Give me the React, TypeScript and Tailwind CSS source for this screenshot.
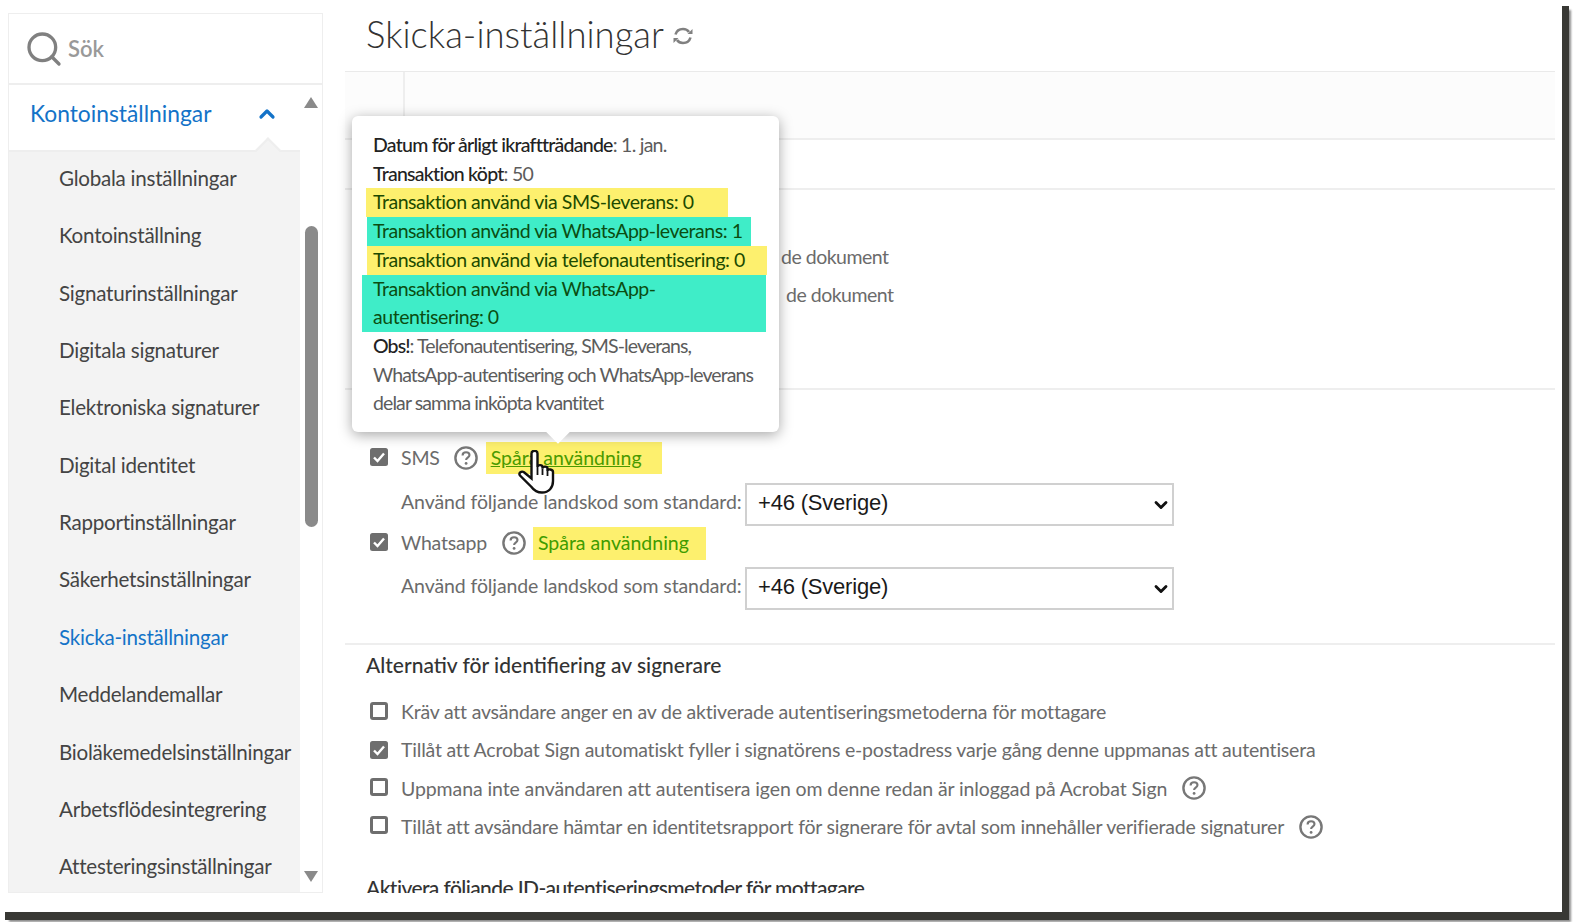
import { ChevronDown, ChevronUp, Search } from "lucide-react";

const MENU_ITEMS = [
  "Globala inställningar",
  "Kontoinställning",
  "Signaturinställningar",
  "Digitala signaturer",
  "Elektroniska signaturer",
  "Digital identitet",
  "Rapportinställningar",
  "Säkerhetsinställningar",
  "Skicka-inställningar",
  "Meddelandemallar",
  "Bioläkemedelsinställningar",
  "Arbetsflödesintegrering",
  "Attesteringsinställningar",
];

function Checkbox({ checked }: { checked?: boolean }) {
  if (checked) {
    return (
      <svg width="18" height="18" viewBox="0 0 18 18" className="shrink-0">
        <rect width="18" height="18" rx="2.5" fill="#6e6e6e" />
        <path d="M4 9.5l3.5 3.5L14 5.5" fill="none" stroke="#fff" strokeWidth="2.4" />
      </svg>
    );
  }
  return <span className="block h-[18px] w-[18px] shrink-0 rounded-[3px] border-[3px] border-[#6e6e6e] bg-white" />;
}

function Help() {
  return (
    <svg width="24" height="24" viewBox="0 0 24 24" className="shrink-0" fill="none" stroke="#777">
      <circle cx="12" cy="12" r="10.6" strokeWidth="2.4" />
      <path d="M8.6 9.4c0-2 1.5-3.1 3.5-3.1s3.4 1.1 3.4 2.8c0 2.6-3.4 2.6-3.4 5" strokeWidth="2.1" />
      <circle cx="12.1" cy="17.4" r="1.4" fill="#777" stroke="none" />
    </svg>
  );
}

function RefreshIcon() {
  return (
    <svg width="22" height="20" viewBox="0 0 22 20" fill="none" stroke="#808080" strokeWidth="2.6" className="mt-[3px]">
      <path d="M3.5 8.5C4.5 5 7.5 3 11 3c2.6 0 4.7 1 6 3" />
      <path d="M18.5 11.5c-1 3.5-4 5.5-7.5 5.5-2.6 0-4.7-1-6-3" />
      <path d="M20.5 3v5h-5z" strokeWidth="0" fill="#808080" />
      <path d="M1.5 17v-5h5z" strokeWidth="0" fill="#808080" />
    </svg>
  );
}

function CountrySelect() {
  return (
    <div className="relative h-[43px] w-[429px] shrink-0">
      <select
        defaultValue="46"
        className="h-full w-full appearance-none border-2 border-[#d0d0d0] bg-white pb-[5px] pl-[11px] font-['Liberation_Sans',sans-serif] text-[22px] text-[#1a1a1a]"
      >
        <option value="46">+46 (Sverige)</option>
      </select>
      <ChevronDown size={20} strokeWidth={3.4} className="pointer-events-none absolute right-[3px] top-[12px] text-[#111]" />
    </div>
  );
}

function UsageStats() {
  return (
    <div className="absolute left-[352px] top-[116px] z-10 h-[316px] w-[427px] rounded-md bg-white pl-[21px] pt-[15px] text-[19.5px] leading-[28.7px] tracking-[-0.45px] whitespace-nowrap text-[#5c5c5c] shadow-[0_3px_14px_rgba(0,0,0,0.35)]">
      <div className="tracking-[-0.75px]"><b className="font-medium text-[#222]">Datum för årligt ikraftträdande</b>: 1. jan.</div>
      <div className="tracking-[-0.75px]"><b className="font-medium text-[#222]">Transaktion köpt</b>: 50</div>
      <div className="-ml-[7px] w-[362px] bg-[#fdf06e] pl-[7px] text-[#1c4a00]">Transaktion använd via SMS-leverans: 0</div>
      <div className="-ml-[6px] w-[384px] bg-[#3fedc8] pl-[6px] text-[#0b4d12]">Transaktion använd via WhatsApp-leverans: 1</div>
      <div className="-ml-[6px] w-[400px] bg-[#fdf06e] pl-[6px] text-[#1c4a00]">Transaktion använd via telefonautentisering: 0</div>
      <div className="-ml-[11px] w-[404px] bg-[#3fedc8] pl-[11px] text-[#0b4d12]">Transaktion använd via WhatsApp-<br />autentisering: 0</div>
      <div className="tracking-[-0.9px]">
        <b className="font-medium text-[#222]">Obs!</b>: Telefonautentisering, SMS-leverans,<br />
        WhatsApp-autentisering och WhatsApp-leverans<br />
        delar samma inköpta kvantitet
      </div>
      <span className="absolute -bottom-[8px] left-[197px] h-[18px] w-[18px] rotate-45 bg-white" />
    </div>
  );
}

function HandCursor() {
  return (
    <svg width="38" height="44" viewBox="0 0 38 44" className="absolute left-[518px] top-[450px] z-20">
      <path
        d="M13.5 3.5c0-3.5 6-3.5 6 0V17c0-2.5 5-2.5 5 0v1.5c0-2.5 5-2.5 5 0V21c0-2.5 5.5-2 5.5 1v9c0 6.5-4 11.5-11 11.5-5.5 0-8-2-10.5-5.5L2 25.5c-1.8-2.5 1.5-5 4-3.2l7.5 6.2z"
        fill="#fff"
        stroke="#111"
        strokeWidth="2.4"
      />
      <path d="M19.5 17v8M24.5 18.5V25M29.5 21v5" stroke="#111" strokeWidth="1.8" />
    </svg>
  );
}

function OptionRow({ checked, text, help, raised, wide }: { checked?: boolean; text: string; help?: boolean; raised?: boolean; wide?: boolean }) {
  return (
    <div className="flex h-[38.5px] items-center whitespace-nowrap">
      <span className={raised ? "mb-[3px] flex" : "flex"}>
        <Checkbox checked={checked} />
      </span>
      <span className={wide ? "ml-[13px] tracking-[-0.1px]" : "ml-[13px]"}>{text}</span>
      {help && <span className="ml-[15px]"><Help /></span>}
    </div>
  );
}

export default function App() {
  return (
    <div className="relative h-[922px] w-[1580px] overflow-hidden bg-white pl-[5px] pt-[6px] font-['Lato',sans-serif]">
      <UsageStats />
      <HandCursor />

      <div className="flex h-[914px] w-[1564px] items-start border-b-[8px] border-r-[7px] border-[#383834] bg-white pl-[3px] pt-[7px] shadow-[3px_3px_2px_-1px_rgba(0,0,0,0.45)]">
        {/* sidebar */}
        <aside className="flex h-[880px] w-[315px] shrink-0 flex-col border border-[#eeeeee]">
          <div className="flex h-[71px] shrink-0 items-center gap-[4px] border-b-2 border-[#eeeeee] pl-[15px]">
            <Search size={40} strokeWidth={2} className="text-[#808080]" />
            <span className="text-[22px] font-semibold text-[#999]">Sök</span>
          </div>
          <div className="flex min-h-0 flex-1">
            <div className="flex w-[291px] shrink-0 flex-col">
              <div className="relative flex h-[67px] shrink-0 items-center justify-between border-b-2 border-[#eeeeee] pb-[8px] pl-[21px] pr-[21px]">
                <span className="text-[22.8px] text-[#1473c8]">Kontoinställningar</span>
                <ChevronUp size={24} strokeWidth={3.2} className="text-[#1473c8]" />
                <span className="absolute -bottom-[9px] right-[23px] z-10 h-[18px] w-[18px] rotate-45 border-l-2 border-t-2 border-[#eeeeee] bg-[#f3f3f3]" />
              </div>
              <ul className="flex-1 overflow-hidden bg-[#f3f3f3] pl-[50px]">
                {MENU_ITEMS.map((item) => (
                  <li
                    key={item}
                    className={`flex h-[57.4px] items-center whitespace-nowrap pb-[5px] text-[20.6px] tracking-[-0.25px] ${
                      item === "Skicka-inställningar" ? "text-[#1473c8]" : "text-[#444]"
                    }`}
                  >
                    {item}
                  </li>
                ))}
              </ul>
            </div>
            <div className="flex flex-1 flex-col items-center pb-[10px] pt-[12px]">
              <span className="h-0 w-0 border-x-[7px] border-b-[11px] border-x-transparent border-b-[#8a8a8a]" />
              <span className="mt-[118px] h-[301px] w-[13px] rounded-full bg-[#8a8a8a]" />
              <span className="mt-auto h-0 w-0 border-x-[7px] border-t-[11px] border-x-transparent border-t-[#8a8a8a]" />
            </div>
          </div>
        </aside>

        {/* main */}
        <main className="ml-[22px] h-[880px] w-[1210px] shrink-0 overflow-hidden text-[19.5px] tracking-[-0.2px] text-[#6b6b6b]">
          <div className="flex h-[59px] items-center gap-[8px] border-b border-[#eaeaea] pb-[16px] pl-[21px]">
            <h1 className="text-[36.5px] font-light tracking-normal text-[#333]">Skicka-inställningar</h1>
            <RefreshIcon />
          </div>
          <div className="h-[68px] border-b-2 border-[#eeeeee] bg-[#fcfcfc] pl-[58px]">
            <div className="h-full border-l-2 border-[#eeeeee]" />
          </div>
          <div className="h-[50px] border-b-2 border-[#eeeeee]" />
          <div className="h-[200px] border-b-2 border-[#eeeeee] pl-[436px] pt-[53px] tracking-[-0.5px]">
            <div className="h-[38px] leading-[28px]">de dokument</div>
            <div className="h-[38px] pl-[5px] leading-[28px]">de dokument</div>
          </div>

          <div className="h-[255px] border-b-2 border-[#eeeeee] pl-[25px] pt-[46px]">
            <div className="flex h-[44px] items-center">
              <span className="mb-[3px] flex"><Checkbox checked /></span>
              <span className="ml-[13px]">SMS</span>
              <span className="ml-[14px]"><Help /></span>
              <span className="ml-[8px] flex h-[32px] items-center bg-[#fdf06e] pl-[5px] pr-[20px] tracking-normal text-[#4a9a00] underline">Spåra användning</span>
            </div>
            <div className="mt-[3px] flex items-center pl-[31px]">
              <span className="w-[344px] shrink-0 whitespace-nowrap pb-[5px] tracking-[-0.1px]">Använd följande landskod som standard:</span>
              <CountrySelect />
            </div>
            <div className="flex h-[34px] items-center">
              <span className="mb-[3px] flex"><Checkbox checked /></span>
              <span className="ml-[13px]">Whatsapp</span>
              <span className="ml-[15px]"><Help /></span>
              <span className="ml-[7px] flex h-[33px] items-center bg-[#fdf06e] pl-[5px] pr-[17px] tracking-normal text-[#3f9c00]">Spåra användning</span>
            </div>
            <div className="mt-[7px] flex items-center pl-[31px]">
              <span className="w-[344px] shrink-0 whitespace-nowrap pb-[5px] tracking-[-0.1px]">Använd följande landskod som standard:</span>
              <CountrySelect />
            </div>
          </div>

          <div className="pl-[25px]">
            <h2 className="-ml-[4px] flex h-[40px] items-center text-[21px] font-medium tracking-normal text-[#333]">Alternativ för identifiering av signerare</h2>
            <div className="mt-[7px]">
              <OptionRow text="Kräv att avsändare anger en av de aktiverade autentiseringsmetoderna för mottagare" />
              <OptionRow checked text="Tillåt att Acrobat Sign automatiskt fyller i signatörens e-postadress varje gång denne uppmanas att autentisera" />
              <OptionRow raised wide text="Uppmana inte användaren att autentisera igen om denne redan är inloggad på Acrobat Sign" help />
              <OptionRow raised text="Tillåt att avsändare hämtar en identitetsrapport för signerare för avtal som innehåller verifierade signaturer" help />
            </div>
            <h2 className="-ml-[4px] mt-[26px] flex h-[32px] items-center whitespace-nowrap text-[21px] font-medium tracking-[-0.6px] text-[#333]">Aktivera följande ID-autentiseringsmetoder för mottagare</h2>
          </div>
        </main>
      </div>
    </div>
  );
}
